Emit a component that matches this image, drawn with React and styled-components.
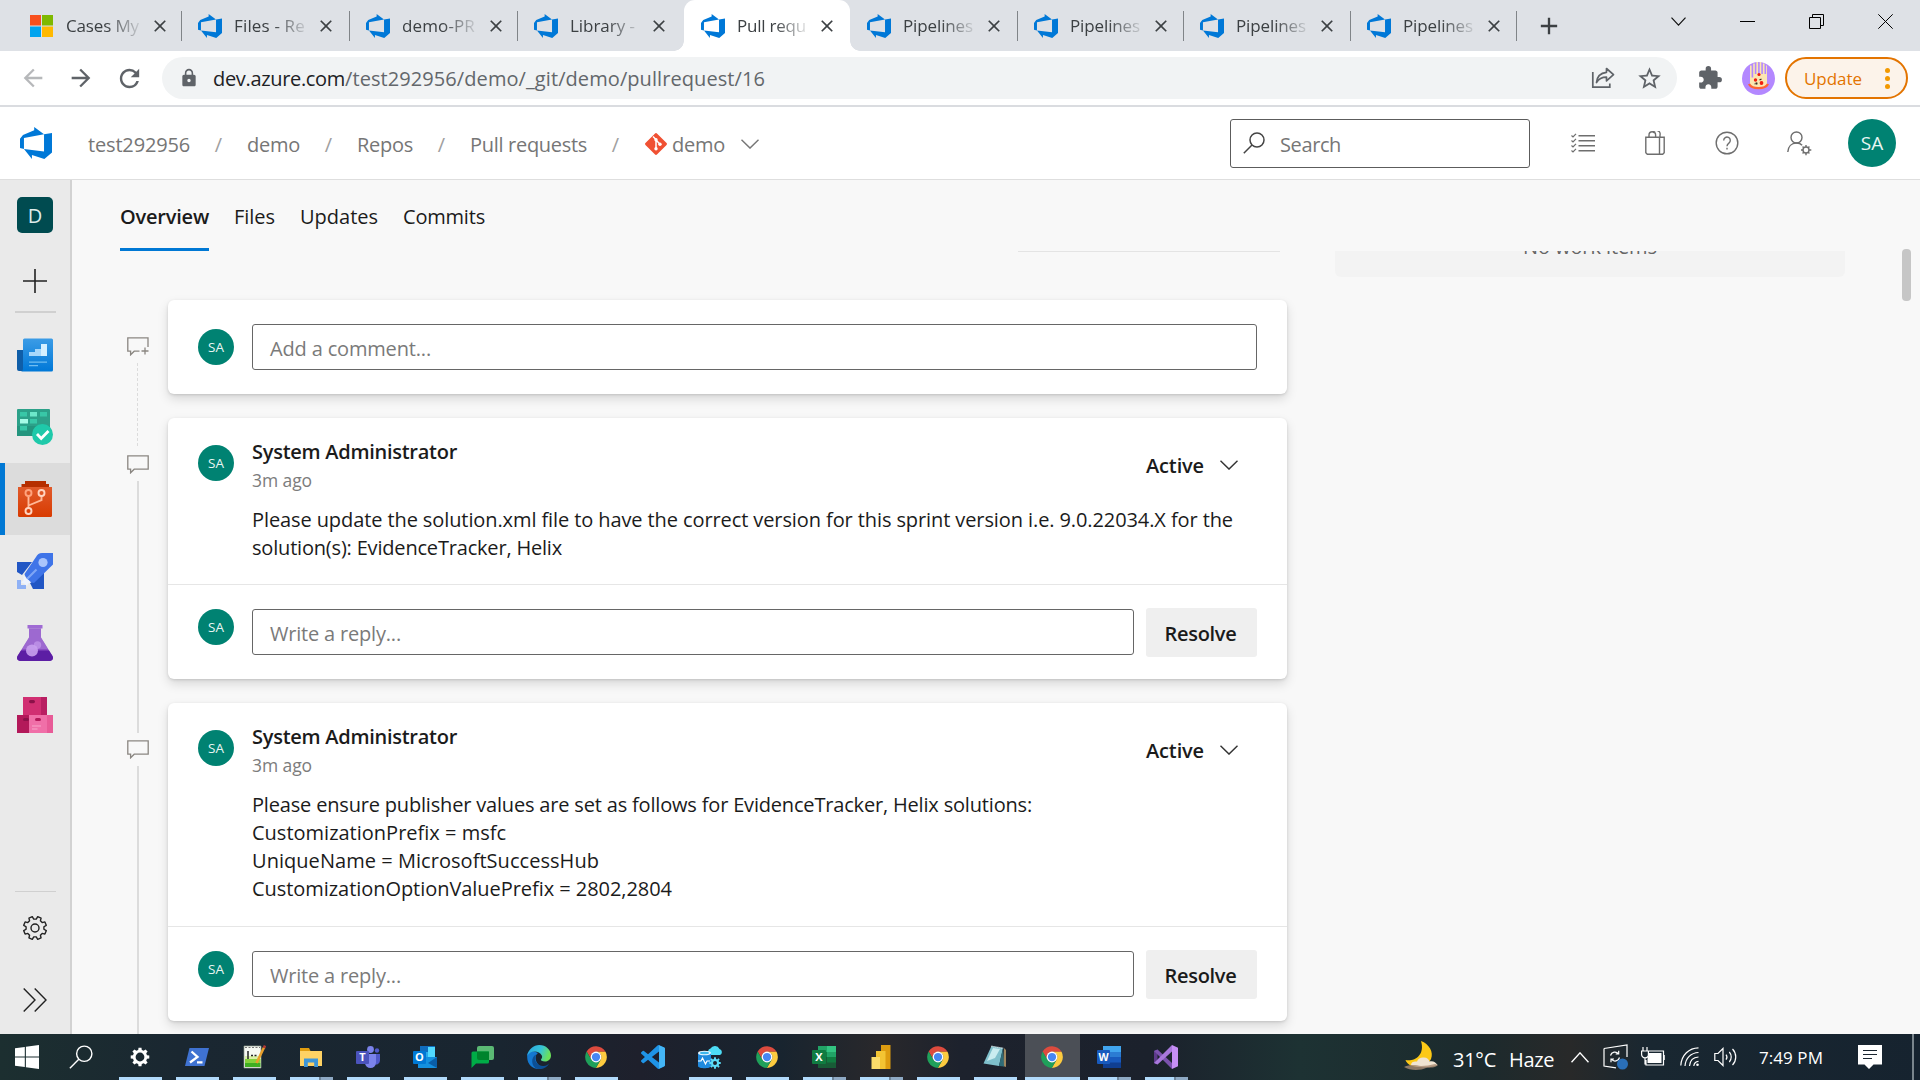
import React, { useLayoutEffect, useRef, useState } from "react";
import styled, { createGlobalStyle, css } from "styled-components";
import { MdExtension, MdLock, MdRefresh, MdStarBorder, MdArrowBack, MdArrowForward, MdAdd, MdClose } from "react-icons/md";

const GlobalStyle = createGlobalStyle`
  * { box-sizing: border-box; }
  body {
    margin: 0;
    overflow: hidden;
    background: #f8f8f8;
    font-family: "Open Sans", "Noto Sans", sans-serif;
    color: #1b1b1b;
  }
  svg { display: block; flex: none; }
`;

const TextBox = styled.span`
  display: inline-block;
  white-space: pre;
  flex: none;
`;

/* Text whose tracking is adjusted so that it spans exactly `w` pixels. */
function Fit({ w, children, className }) {
  const ref = useRef(null);
  const [tracking, setTracking] = useState(null);
  useLayoutEffect(() => {
    const natural = ref.current.getBoundingClientRect().width;
    setTracking((w - natural) / String(children).length);
  }, [w, children]);
  return (
    <TextBox ref={ref} className={className} style={{ letterSpacing: tracking === null ? undefined : `${tracking}px` }}>
      {children}
    </TextBox>
  );
}

/* ---------- shared layout ---------- */

const Screen = styled.div`
  width: 1920px;
  height: 1080px;
  display: flex;
  flex-direction: column;
  overflow: hidden;
`;

const Avatar = styled.div`
  width: ${(p) => p.$size}px;
  height: ${(p) => p.$size}px;
  border-radius: 50%;
  background: #008272;
  color: #e8f6f3;
  font-size: ${(p) => p.$font}px;
  display: flex;
  align-items: center;
  justify-content: center;
  flex: none;
`;

/* ---------- browser tabs ---------- */

const TabStrip = styled.div`
  height: 51px;
  background: #dee1e6;
  display: flex;
  padding-left: 13px;
  flex: none;
`;

const BrowserTab = styled.div`
  width: ${(p) => p.$w}px;
  height: 51px;
  display: flex;
  align-items: center;
  padding: 0 15px 0 17px;
  font-size: 17px;
  color: #3c4043;
  position: relative;
  ${(p) =>
    p.$active &&
    css`
      background: #fff;
      border-radius: 11px 11px 0 0;
      &::before,
      &::after {
        content: "";
        position: absolute;
        bottom: 0;
        width: 10px;
        height: 10px;
      }
      &::before {
        left: -10px;
        background: radial-gradient(circle at 0 0, transparent 9.5px, #fff 10px);
      }
      &::after {
        right: -10px;
        background: radial-gradient(circle at 100% 0, transparent 9.5px, #fff 10px);
      }
    `}
`;

const TabLabel = styled.div`
  width: 75px;
  margin: 0 11px 0 12px;
  white-space: nowrap;
  line-height: 28px;
  mask-image: linear-gradient(90deg, #000 55%, rgba(0, 0, 0, 0.15) 100%);
`;

const TabRule = styled.div`
  width: 1px;
  height: 30px;
  margin: 11px -1px 0 0;
  background: #808488;
  visibility: ${(p) => (p.$hidden ? "hidden" : "visible")};
`;

const NewTab = styled.div`
  display: flex;
  align-items: center;
  margin-left: 19px;
  color: #3c4043;
`;

const WindowButtons = styled.div`
  display: flex;
  margin-left: auto;
  padding-bottom: 8px;
`;

const WindowButton = styled.div`
  width: 69px;
  display: flex;
  align-items: center;
  justify-content: center;
`;

/* ---------- address bar ---------- */

const Toolbar = styled.div`
  height: 56px;
  background: #fff;
  border-bottom: 2px solid #dadce0;
  display: flex;
  align-items: center;
  color: #5f6368;
  flex: none;
`;

const NavIcon = styled.div`
  width: 48px;
  display: flex;
  justify-content: center;
  opacity: ${(p) => (p.$dim ? 0.45 : 1)};
`;

const NavGroup = styled.div`
  display: flex;
  padding-left: 9px;
  width: 162px;
`;

const Omnibox = styled.div`
  width: 1515px;
  height: 42px;
  border-radius: 21px;
  background: #f1f3f4;
  display: flex;
  align-items: center;
  padding: 0 14px 0 17px;
  font-size: 20px;
`;

const Url = styled.div`
  margin-left: 14px;
  flex: 1;
  display: flex;
  line-height: 30px;
  padding-top: 1px;
  color: #63676b;
`;

const Host = styled(Fit)`
  color: #202124;
`;

const OmniActions = styled.div`
  display: flex;
  gap: 21px;
  align-items: center;
`;

const ToolbarActions = styled.div`
  display: flex;
  align-items: center;
  padding-left: 20px;
`;

const PizzaAvatar = styled.div`
  margin: 0 10px 0 19px;
`;

const UpdateButton = styled.div`
  width: 123px;
  height: 42px;
  border-radius: 21px;
  border: 2px solid #e37400;
  background: #fcf3ea;
  color: #e37400;
  font-size: 17px;
  display: flex;
  align-items: center;
  justify-content: space-between;
  padding: 0 16px 0 17px;
`;

const Dots = styled.div`
  display: grid;
  gap: 3px;
  i {
    width: 5px;
    height: 5px;
    border-radius: 50%;
    background: #f29900;
  }
`;

/* ---------- Azure DevOps header ---------- */

const Header = styled.div`
  height: 73px;
  background: #fff;
  border-bottom: 1px solid #dedede;
  display: flex;
  align-items: center;
  padding: 0 24px 0 20px;
  font-size: 20px;
  color: #767676;
  flex: none;
`;

const Crumbs = styled.div`
  display: flex;
  align-items: center;
  margin-left: 36px;
  line-height: 28px;
  flex: 1;
  padding-top: 3px;
`;

const Slash = styled.span`
  width: 9px;
  margin: 0 24px;
  text-align: center;
  color: #a0a0a0;
`;

const RepoCrumb = styled.div`
  display: flex;
  align-items: center;
  margin-left: 1px;
  svg {
    margin-top: -2px;
  }
  svg:first-child {
    margin-right: 5px;
  }
  svg:last-child {
    margin-left: 16px;
  }
`;

const SearchBox = styled.div`
  width: 300px;
  height: 49px;
  border: 1px solid #5c5c5c;
  border-radius: 3px;
  display: flex;
  align-items: center;
  padding-left: 12px;
  gap: 15px;
  span {
    padding-top: 2px;
  }
`;

const HeaderIcon = styled.div`
  width: 72px;
  display: flex;
  justify-content: center;
`;

const HeaderIcons = styled.div`
  display: flex;
  align-items: center;
  margin: 0 13px 0 17px;
`;

/* ---------- body ---------- */

const Body = styled.div`
  height: 854px;
  display: flex;
  flex: none;
`;

const Rail = styled.nav`
  width: 72px;
  border-right: 2px solid #d2d2d2;
  background: #eaeaea;
  display: flex;
  flex-direction: column;
  overflow: hidden;
  flex: none;
`;

const RailItem = styled.div`
  height: ${(p) => p.$h || 72}px;
  display: flex;
  align-items: center;
  flex: none;
  padding-left: ${(p) => (p.$selected ? 12 : 17)}px;
  border-left: ${(p) => (p.$selected ? "5px solid #0078d4" : "0")};
  background: ${(p) => (p.$selected ? "#dcdcdc" : "transparent")};
`;

const ThinGlyph = styled.div`
  padding: ${(p) => p.$drop || 0}px 0 0 6px;
`;

const RailRule = styled.div`
  height: ${(p) => p.$h}px;
  margin: ${(p) => p.$m};
  background: #d0d0d0;
  flex: none;
`;

const ProjectTile = styled.div`
  width: 36px;
  height: 36px;
  border-radius: 5px;
  background: #004b50;
  color: #dfeceb;
  font-size: 20px;
  display: flex;
  align-items: center;
  justify-content: center;
`;

const Main = styled.main`
  flex: 1;
  display: flex;
  flex-direction: column;
  overflow: hidden;
`;

const PageTabs = styled.div`
  height: 71px;
  display: flex;
  gap: 25px;
  padding-left: 48px;
  font-size: 20px;
  flex: none;
`;

const PageTab = styled.div`
  height: 71px;
  padding-top: 23px;
  line-height: 28px;
  font-weight: ${(p) => (p.$active ? 600 : 400)};
  border-bottom: 3px solid ${(p) => (p.$active ? "#0078d4" : "transparent")};
`;

const Scroller = styled.div`
  flex: 1;
  display: flex;
  overflow: hidden;
`;

const Feed = styled.div`
  width: 1263px;
  padding-left: 48px;
  flex: none;
`;

const PastEdge = styled.div`
  width: 262px;
  height: 1px;
  margin: 0 0 48px 898px;
  background: #e4e4e4;
`;

const Entry = styled.div`
  display: flex;
  gap: 12px;
`;

const Gutter = styled.div`
  width: 36px;
  display: flex;
  flex-direction: column;
  align-items: center;
  flex: none;
`;

const Line = styled.div`
  width: 2px;
  ${(p) => (p.$h ? `height: ${p.$h}px;` : "flex: 1;")}
  background: ${(p) =>
    p.$look === "none"
      ? "transparent"
      : p.$look === "dashed"
        ? "linear-gradient(90deg, #dcdcdc 50%, transparent 50%) 0 0 / 2px 100%"
        : "#dcdcdc"};
  ${(p) => p.$look === "dashed" && "mask-image: repeating-linear-gradient(180deg, #000 0 3px, transparent 3px 5px);"}
`;

const GutterIcon = styled.div`
  height: 33px;
  padding-top: 7px;
`;

const Card = styled.section`
  width: 1119px;
  margin-bottom: 24px;
  border-radius: 6px;
  background: #fff;
  box-shadow: 0 5px 11px rgba(0, 0, 0, 0.13), 0 1px 3px rgba(0, 0, 0, 0.13);
  font-size: 20px;
  line-height: 28px;
`;

const ComposeRow = styled.div`
  height: 94px;
  display: flex;
  align-items: flex-start;
  padding: ${(p) => p.$top}px 30px 0;
`;

const ComposeAvatar = styled.div`
  padding-top: ${(p) => p.$drop}px;
  margin-right: 18px;
`;

const Field = styled.div`
  flex: 1;
  height: 46px;
  margin-top: ${(p) => p.$drop || 0}px;
  border: 1px solid #666;
  border-radius: 3px;
  display: flex;
  align-items: center;
  padding: 3px 0 0 17px;
  color: #7a7a7a;
`;

const Resolve = styled.div`
  width: 111px;
  height: 49px;
  margin-left: 12px;
  border-radius: 3px;
  background: #efefef;
  font-weight: 600;
  display: flex;
  align-items: center;
  justify-content: center;
  padding: 2px 2px 0 0;
`;

const Comment = styled.div`
  display: flex;
  padding: 20px 30px ${(p) => p.$bottom}px;
  border-bottom: 1px solid #e6e6e6;
`;

const CommentText = styled.div`
  flex: 1;
  margin-left: 18px;
`;

const CommentAvatar = styled.div`
  padding-top: 7px;
`;

const CommentHead = styled.div`
  display: flex;
  justify-content: space-between;
  height: 68px;
`;

const Author = styled.div`
  font-weight: 600;
`;

const Ago = styled.div`
  font-size: 17.5px;
  color: #7c7c7c;
`;

const Status = styled.div`
  display: flex;
  align-items: flex-start;
  font-weight: 600;
  padding: 14px 19px 0 0;
  svg {
    margin: 8px 0 0 16px;
  }
`;

const BodyLine = styled.div`
  height: 28px;
`;

const Side = styled.aside`
  width: 510px;
  overflow: hidden;
`;

const EmptyBox = styled.div`
  height: 60px;
  margin-top: -34px;
  padding-bottom: 2px;
  border-radius: 6px;
  background: #f3f3f3;
  color: #666;
  font-size: 20px;
  display: flex;
  align-items: center;
  justify-content: center;
`;

const ScrollTrack = styled.div`
  width: 18px;
  padding-top: 69px;
  flex: none;
`;

const ScrollThumb = styled.div`
  width: 9px;
  height: 52px;
  border-radius: 4px;
  background: #c6c6c6;
`;

/* ---------- taskbar ---------- */

const Taskbar = styled.div`
  height: 46px;
  display: flex;
  flex: none;
  color: #fff;
  background: linear-gradient(90deg, #1c2f30 0, #1a2731 180px, #192530 500px, #1e202c 640px, #18242f 780px, #29282b 880px, #1d222d 960px, #1b212c 1150px, #1d3233 1300px, #1c2a2d 1480px, #282929 1570px, #192731 1650px, #16232f 1920px);
`;

const SystemButton = styled.div`
  width: 54px;
  display: flex;
  align-items: center;
  justify-content: center;
`;

const Apps = styled.div`
  display: flex;
  gap: 2px;
  margin-left: 5px;
`;

const AppButton = styled.div`
  width: 55px;
  height: 46px;
  padding-top: 11px;
  display: flex;
  flex-direction: column;
  align-items: center;
  justify-content: space-between;
  background: ${(p) => (p.$active ? "#4b4f56" : "transparent")};
  svg {
    margin-right: 1px;
  }
`;

const Running = styled.div`
  width: ${(p) => (p.$mode === "active" ? 55 : 43)}px;
  height: 3px;
  visibility: ${(p) => (p.$mode === "off" ? "hidden" : "visible")};
  background: ${(p) => (p.$mode === "multi" ? "linear-gradient(90deg, #b1dafb 29px, #6d8499 29px 31px, #8ea9c4 31px)" : "#b1dafb")};
`;

const Tray = styled.div`
  margin-left: auto;
  display: flex;
  align-items: center;
`;

const Weather = styled.div`
  display: flex;
  align-items: center;
  font-size: 20px;
  gap: 13px;
  padding-top: 4px;
  svg {
    margin-top: -6px;
  }
`;

const TrayIcons = styled.div`
  display: flex;
  align-items: center;
  gap: 14px;
  margin: 0 21px 0 17px;
`;

const SyncGroup = styled.div`
  display: flex;
  align-items: center;
  gap: 12px;
`;

const Clock = styled.div`
  font-size: 17px;
`;

const Notify = styled.div`
  margin: 0 30px 0 35px;
`;

const DesktopPeek = styled.div`
  width: 8px;
  height: 46px;
  border-left: 2px solid #7a858c;
`;

/* ---------- drawings ---------- */

const DevOps = ({ size = 24 }) => (
  <svg width={size} height={size} viewBox="0 0 24 24">
    <path
      fill="#0078d7"
      d="M0 8.877L2.247 5.91l8.405-3.416V.022l7.37 5.393L2.966 8.338v8.225L0 15.707zm24-4.45v14.651l-5.753 4.9-9.303-3.057v3.056l-5.978-7.416 15.057 1.798V5.415z"
    />
  </svg>
);

const MsLogo = () => (
  <svg width="24" height="24" viewBox="0 0 24 24">
    <path fill="#f8501e" d="M0 1h11v10.500H0z" />
    <path fill="#7fb900" d="M12 1h11v10.500H12z" />
    <path fill="#01a4ef" d="M0 12.500h11V23H0z" />
    <path fill="#ffb901" d="M12 12.500h11V23H12z" />
  </svg>
);

const Chevron = ({ w = 18, h = 10, color = "#333", flip, sw = 1.4 }) => (
  <svg width={w} height={h} viewBox={`0 0 ${w} ${h}`} fill="none" stroke={color} strokeWidth={sw}>
    <path d={flip ? `M.5 ${h - 0.7}L${w / 2} .9L${w - 0.5} ${h - 0.7}` : `M.5 .7L${w / 2} ${h - 0.9}L${w - 0.5} .7`} />
  </svg>
);

const Share = () => (
  <svg width="24" height="24" viewBox="0 0 24 24" fill="none" stroke="#5f6368" strokeWidth="1.700">
    <path d="M1.800 6v15.200h17V17.500" />
    <path d="M15.500 2.500l7 6.200-7 6.200v-3.700c-4.500 0-7.800 1.600-10 5.300.5-6 3.800-9.500 10-10.200z" strokeLinejoin="round" />
  </svg>
);

const Pizza = () => (
  <svg width="33" height="33" viewBox="0 0 33 33">
    <circle cx="16.500" cy="16.500" r="16.500" fill="#b388ff" />
    <path fill="#fbe6b2" d="M8 3.500h1.600v12h1.600V1.500h1.600V12h1.600V0h1.700v12h1.600V0h1.600v12h1.600V1.500h1.600V12h1.600V3.500H25V23c-4 4.500-13 4.500-17 0z" />
    <path d="M7 22c3 5.500 16 5.500 19 0" fill="none" stroke="#ff6333" strokeWidth="2.400" />
    <circle cx="17" cy="12.500" r="1.600" fill="#f21d0d" />
    <circle cx="13.500" cy="18" r="1.700" fill="#f21d0d" />
    <circle cx="19.500" cy="21" r="1.900" fill="#f21d0d" />
    <path stroke="#3a2a20" strokeWidth="1.300" d="M17.500 18l2-1M12.500 22l3-1M14 20.500l1 2" />
  </svg>
);

const Git = () => (
  <svg width="22" height="22" viewBox="0 0 22 22">
    <path fill="#f05133" d="M9.800.7a1.600 1.600 0 0 1 2.400 0l9.100 9.100a1.600 1.600 0 0 1 0 2.400l-9.100 9.100a1.600 1.600 0 0 1-2.400 0L.7 12.200a1.600 1.600 0 0 1 0-2.400z" />
    <path d="M8 3.500l3 3v9.500M11 7l3.800 4" stroke="#fff" strokeWidth="1.500" fill="none" />
    <g fill="#fff">
      <circle cx="11" cy="6.800" r="1.700" />
      <circle cx="11" cy="15.700" r="1.700" />
      <circle cx="15" cy="11.200" r="1.700" />
    </g>
  </svg>
);

const Magnifier = ({ size = 22, color = "#444", sw = 1.5 }) => (
  <svg width={size} height={size} viewBox="0 0 22 22" fill="none" stroke={color} strokeWidth={sw}>
    <circle cx="14" cy="8" r="7" />
    <path d="M9 13L.8 21.200" />
  </svg>
);

const TaskList = () => (
  <svg width="24" height="20" viewBox="0 0 24 20" fill="none" stroke="#6e6e6e" strokeWidth="1.400">
    <path d="M7.500 2.700H24M7.500 7.700H24M7.500 12.700H24M7.500 17.700H24" />
    <path d="M.5 2.500l1.500 1.500L5 .8M.5 7.500L2 9l3-3.200M.5 12.500L2 14l3-3.200M.5 17.500L2 19l3-3.200" strokeWidth="1.200" />
  </svg>
);

const Bag = () => (
  <svg width="20" height="24" viewBox="0 0 20 24" fill="none" stroke="#6e6e6e" strokeWidth="1.400">
    <path d="M.8 6.300h18.400v15.500l-1.500 1.500H2.300L.8 21.800zM14.500 6.300v17M4 6.300V4a3.300 3.300 0 0 1 6.600 0v2.300M8 2a3.300 3.300 0 0 1 7 2v2.300" />
  </svg>
);

const Help = () => (
  <svg width="24" height="24" viewBox="0 0 24 24" fill="none" stroke="#6e6e6e" strokeWidth="1.400">
    <circle cx="12" cy="12" r="10.800" />
    <path d="M8.700 9.500a3.300 3.300 0 1 1 5.200 2.600c-1.300.9-1.900 1.500-1.900 3.200M12 16.800v1.800" />
  </svg>
);

const UserSettings = () => (
  <svg width="25" height="25" viewBox="0 0 25 25" fill="none" stroke="#6e6e6e" strokeWidth="1.400">
    <circle cx="9.500" cy="6.500" r="5.500" />
    <path d="M.8 21c.3-5.500 3.800-9 8.700-9 2.500 0 4.300.8 5.600 2.200" />
    <circle cx="19" cy="19" r="3" />
    <path d="M19 14v2M19 22v2.300M14 19h2M22 19h2.300M15.600 15.600l1.300 1.300M21.100 21.100l1.300 1.300M15.600 22.400l1.300-1.300M21.100 16.900l1.300-1.300" />
  </svg>
);

const Plus = () => (
  <svg width="24" height="24" viewBox="0 0 24 24" stroke="#222" strokeWidth="1.600">
    <path d="M12 0v24M0 12h24" />
  </svg>
);

const OverviewIcon = () => (
  <svg width="36" height="36" viewBox="0 0 36 36">
    <defs>
      <linearGradient id="ov" x1="0" y1="0" x2="0" y2="1">
        <stop offset="0" stopColor="#3c9ce6" />
        <stop offset="1" stopColor="#0078d7" />
      </linearGradient>
    </defs>
    <path fill="#0f5ea8" d="M0 13h7v21H2a2 2 0 0 1-2-2z" />
    <path fill="url(#ov)" d="M6 3a1.500 1.500 0 0 1 1.500-1.500h27A1.500 1.500 0 0 1 36 3v30a1.500 1.500 0 0 1-1.500 1.500H4A2.500 2.500 0 0 0 6 32z" />
    <path fill="#a8d8fb" d="M12 15h6v-3h6V7h6v12H12z" />
    <path fill="#d6f0ff" d="M24 7h6v12h-6z" />
    <path fill="#6fbdf2" d="M12 24.500h18v1.200H12zM12 28h9v1.200h-9z" />
  </svg>
);

const BoardsIcon = () => (
  <svg width="36" height="36" viewBox="0 0 36 36">
    <path fill="#2ca189" d="M0 1a1 1 0 0 1 1-1h31a1 1 0 0 1 1 1v26H0z" />
    <path fill="#1c8a74" d="M0 17h33v10H0z" opacity=".5" />
    <path fill="#38c7a7" d="M3 3h7v4.500H3zM23 3h7v4.500h-7zM13 10h7v4.500h-7zM3 17h7v4.500H3z" />
    <path fill="#6de7ca" d="M13 3h7v4.500h-7z" />
    <path fill="#a5fbe6" d="M3 10h8v4.500H3z" />
    <circle cx="25.500" cy="25.500" r="10.500" fill="#1fc9aa" />
    <path d="M20 25l4.200 4.500L31.500 22" fill="none" stroke="#fff" strokeWidth="2.800" />
  </svg>
);

const ReposIcon = () => (
  <svg width="36" height="36" viewBox="0 0 36 36">
    <defs>
      <linearGradient id="rp" x1="0" y1="0" x2="0" y2="1">
        <stop offset="0" stopColor="#e05a2b" />
        <stop offset="1" stopColor="#d83b01" />
      </linearGradient>
    </defs>
    <path fill="#b52e00" d="M8 0h21v3h3v4H4.500V3H8z" />
    <path fill="url(#rp)" d="M1 6h34v28.500A1.500 1.500 0 0 1 33.500 36h-31A1.500 1.500 0 0 1 1 34.500z" />
    <g fill="none" strokeWidth="1.900">
      <path d="M11.500 15v12M11.500 24.500L24.500 19v-4" stroke="#ffb898" />
      <circle cx="11.500" cy="12" r="3" stroke="#ffa37d" />
      <circle cx="24.500" cy="12" r="3" stroke="#ffd4c1" />
      <circle cx="11.500" cy="30" r="3" stroke="#ffd4c1" />
    </g>
  </svg>
);

const PipelinesIcon = () => (
  <svg width="36" height="36" viewBox="0 0 36 36">
    <path fill="#2156c4" d="M0 9h15L5 22 0 19zM27 17v19H16l-4-8z" />
    <path fill="#3f74e8" d="M36 0v11.500L17 30c-3 0-9-5-9.500-9L19 4c1.500-2.500 3-4 6-4z" />
    <circle cx="26" cy="9.500" r="4.600" fill="#a9c4fb" />
    <path d="M19.500 16.500L9 27" stroke="#7fa5f5" strokeWidth="2.200" />
    <path fill="#eef3fe" d="M6.500 22.500l3 3 5 4-3.500 1-1 2.500-3-2.500-3-.5 2.500-3z" />
    <path fill="#8fb1f5" d="M0 27h4v5h5v4H0z" />
  </svg>
);

const TestIcon = () => (
  <svg width="36" height="36" viewBox="0 0 36 36">
    <path fill="#a06bd4" d="M10.500 0h15v3.500h-15z" />
    <path fill="#8a4fc4" d="M12 3.500h12v9L35.500 31c1.300 2.500 0 5-3 5h-29c-3 0-4.300-2.500-3-5L12 12.500z" />
    <path fill="#b48ae0" d="M12 3.500h12v9l7 11.500H5l7-11.500z" opacity=".45" />
    <path fill="#5c1ea4" d="M4 25.500h28l3.500 5.500c1.300 2.500 0 5-3 5h-29c-3 0-4.300-2.500-3-5z" />
    <circle cx="20.500" cy="20" r="3.700" fill="#b98ce4" />
    <circle cx="15" cy="25.500" r="6" fill="#c9a0ee" opacity=".9" />
  </svg>
);

const ArtifactsIcon = () => (
  <svg width="36" height="36" viewBox="0 0 36 36">
    <path fill="#d12f72" d="M6 0h18v18H6z" />
    <path fill="#b91f62" d="M24 0h6v18h-6z" />
    <path fill="#b3195a" d="M0 18h12v18H0z" />
    <path fill="#f06fa8" d="M12 18h18v18H12z" />
    <path fill="#e85b97" d="M30 18h6v18h-6z" />
    <g fill="#8b1149">
      <rect x="12" y="3" width="6" height="3.200" rx="1.600" />
      <rect x="6" y="21" width="6" height="3" rx="1.500" />
    </g>
    <rect x="18" y="21" width="6" height="3" rx="1.500" fill="#b3195a" />
    <path fill="#f8a5c9" d="M15 28.500h9v1h-9zM15 31.500h5.500v1H15z" />
  </svg>
);

const gearPath = (cx, cy, ro, ri, teeth) => {
  const pts = [];
  const step = (Math.PI * 2) / teeth;
  for (let i = 0; i < teeth; i++) {
    const a = i * step - Math.PI / 2;
    [[-0.32, ri], [-0.2, ro], [0.2, ro], [0.32, ri]].forEach(([k, r]) =>
      pts.push(`${(cx + r * Math.cos(a + k * step)).toFixed(2)} ${(cy + r * Math.sin(a + k * step)).toFixed(2)}`)
    );
  }
  return `M${pts.join("L")}Z`;
};

const Gear = () => (
  <svg width="24" height="24" viewBox="0 0 24 24" fill="none" stroke="#222" strokeWidth="1.400" strokeLinejoin="round">
    <path d={gearPath(12, 12, 11.6, 9, 8)} transform="rotate(22.500 12 12)" />
    <circle cx="12" cy="12" r="4" />
  </svg>
);

const Expand = () => (
  <svg width="24" height="24" viewBox="0 0 24 24" fill="none" stroke="#222" strokeWidth="1.400">
    <path d="M.7.5L12 12 .7 23.500M11.700.5L23 12 11.700 23.500" />
  </svg>
);

const Bubble = ({ plus }) => (
  <svg width="22" height="19" viewBox="0 0 22 19" fill="none" stroke="#8a8681" strokeWidth="1.300">
    {plus ? (
      <path d="M21 10V.8H.8v13.400h2.800v3.600l3.600-3.600h5.300M18 10.500v7M14.500 14h7" />
    ) : (
      <path d="M.8.8h20.400v13.400H7.200l-3.600 3.600v-3.600H.8z" />
    )}
  </svg>
);

const Ico = ({ children }) => (
  <svg width="24" height="24" viewBox="0 0 24 24">
    {children}
  </svg>
);

const WindowsLogo = () => (
  <Ico>
    <path fill="#fff" d="M0 3.300L9.800 2v9.500H0zM10.900 1.800L24 0v11.500H10.900zM0 12.500h9.800V22L0 20.700zM10.900 12.500H24V24l-13.100-1.800z" />
  </Ico>
);

const SettingsIcon = () => (
  <Ico>
    <path fill="#fff" fillRule="evenodd" d={`${gearPath(12, 12, 9.4, 7.2, 8)}M12 7.600a4.400 4.400 0 1 0 0 8.800a4.400 4.400 0 1 0 0-8.800z`} />
  </Ico>
);

const PowerShell = () => (
  <Ico>
    <path fill="#3f72d1" d="M4.500 3H24l-4.500 18H0z" />
    <path fill="none" stroke="#fff" strokeWidth="2.300" d="M6.500 6.500l6 5.500-7.500 5.500M12 17.300h5.500" />
  </Ico>
);

const NotepadPP = () => (
  <Ico>
    <path fill="#f5f8f2" stroke="#8f9b8c" strokeWidth=".7" d="M2 1h17v22H2z" />
    <path fill="#d9f0a6" d="M3 11h15.500v5H3z" />
    <path fill="#86d23c" d="M3 14h15.500v4H3z" />
    <path fill="#3fae22" d="M3 18h15.500v4H3z" />
    <path fill="none" stroke="#777" strokeWidth="1" strokeDasharray="2 1.500" d="M3 2.500h15" />
    <path stroke="#222" strokeWidth="1.500" d="M6 6v8M9 10.500h2M12.500 10.500h2" />
    <path stroke="#e9a02c" strokeWidth="2.600" d="M22 2.500L14.500 18" />
    <path stroke="#b53a34" strokeWidth="2.600" d="M23 .5l-1 2.500" />
  </Ico>
);

const Explorer = () => (
  <Ico>
    <path fill="#e09d0f" d="M1 3h9l1.500 3H1z" />
    <path fill="#fed264" d="M1 6h22v15H1z" />
    <path fill="#3e96d8" d="M5 13.500h14V22h-3.800v-4.500H8.800V22H5z" />
  </Ico>
);

const OfficeLetter = ({ x, y, size, children }) => (
  <text x={x} y={y} fontSize={size} fontWeight="700" fill="#fff" textAnchor="middle" fontFamily="Open Sans, sans-serif">
    {children}
  </text>
);

const Teams = () => (
  <Ico>
    <circle cx="14.500" cy="4.500" r="3.400" fill="#7b83eb" />
    <circle cx="21" cy="5.500" r="2.200" fill="#5059c9" />
    <path fill="#5059c9" d="M15 9h9v6.500a4 4 0 0 1-6 3.500z" />
    <path fill="#7b83eb" d="M9 9h11v8.500a5.500 5.500 0 0 1-11 0z" />
    <rect y="6" width="13" height="13" rx="1" fill="#4b53bc" />
    <OfficeLetter x={6.500} y={16.400} size={11}>T</OfficeLetter>
  </Ico>
);

const Outlook = () => (
  <Ico>
    <path fill="#0f6cbd" d="M7 1h15v12H7z" />
    <path fill="#50d9ff" d="M15 2h7v10h-7z" />
    <path fill="#28a8ea" d="M7 7h8v6H7z" />
    <path fill="#1490df" d="M5 12h19v11H5z" />
    <path fill="#0a5ea8" d="M24 12l-9 6 9 5z" />
    <rect y="6" width="13" height="13" rx="1" fill="#0078d4" />
    <OfficeLetter x={6.500} y={16.400} size={11}>O</OfficeLetter>
  </Ico>
);

const Chat = () => (
  <Ico>
    <rect x="7" y="1" width="17" height="14" rx="2" fill="#5bb974" />
    <path fill="#00ac47" d="M3 6.500h15a1 1 0 0 1 1 1V17a1.500 1.500 0 0 1-1.500 1.500H6L1.500 23V8A1.500 1.500 0 0 1 3 6.500z" />
    <path fill="#00832d" d="M7 6.500h12v8.500H9a2 2 0 0 1-2-2z" />
  </Ico>
);

const Edge = () => (
  <Ico>
    <defs>
      <linearGradient id="ed" x1="0" y1="0" x2="1" y2=".3">
        <stop offset="0" stopColor="#2ba4e0" />
        <stop offset=".6" stopColor="#35c3d8" />
        <stop offset="1" stopColor="#6ae05a" />
      </linearGradient>
    </defs>
    <path fill="#1478d0" d="M.2 11C.5 4 6 6 11 8c-2 1.500-3 4-2 7.500 1 3.500 4 6.500 8 7-6 3.500-17.500.5-16.800-11.500z" />
    <path fill="#0c4f94" d="M9.500 9.500C6 13 9 20.500 16 21c3 .2 5.500-1.500 6.500-3-2.500 5-7.500 6.500-11.500 6-5-1-6.500-6.500-5.500-10 .6-2.200 2.200-4 4-4.500z" />
    <path fill="url(#ed)" d="M.2 11C1.500 4 6.500 0 12.300 0 19 0 24 5 24 10.500c0 3.500-2.500 6-6 6-3 0-4.500-1.200-4-2 1-1.500 1.500-2.500.8-4C13.500 8 10.500 6.500 7.500 6.500 4 6.500 1.500 8.500.2 11z" />
  </Ico>
);

const Chrome = () => {
  const blade = "M12 6.200H22.400A12 12 0 0 0 1.780 5.900L6.980 14.900A5.800 5.800 0 0 1 12 6.200Z";
  return (
    <Ico>
      <g transform="translate(1 1) scale(.9167)">
        <path d={blade} fill="#dd4b3e" />
        <path d={blade} fill="#fdcb3f" transform="rotate(120 12 12)" />
        <path d={blade} fill="#1fa05a" transform="rotate(240 12 12)" />
        <circle cx="12" cy="12" r="5.900" fill="#fff" />
        <circle cx="12" cy="12" r="4.500" fill="#4687f4" />
      </g>
    </Ico>
  );
};

const VsCode = () => (
  <Ico>
    <path
      fill="#1f94e6"
      d="M23.150 2.587L18.210.21a1.494 1.494 0 0 0-1.705.29l-9.460 8.630-4.120-3.128a.999.999 0 0 0-1.276.057L.327 7.261A1 1 0 0 0 .326 8.740L3.899 12 .326 15.260a1 1 0 0 0 .001 1.479L1.650 17.940a.999.999 0 0 0 1.276.057l4.120-3.128 9.460 8.630a1.492 1.492 0 0 0 1.704.290l4.942-2.377A1.500 1.500 0 0 0 24 20.060V3.939a1.500 1.500 0 0 0-.850-1.352zm-5.146 14.861L10.826 12l7.178-5.448v10.896z"
    />
    <path fill="#44b5f5" d="M18 .2l5.150 2.387A1.500 1.500 0 0 1 24 3.939V20.060a1.500 1.500 0 0 1-.850 1.300L18 23.800z" />
  </Ico>
);

const DataStudio = () => (
  <Ico>
    <path fill="#4ddcf5" d="M12 10a3.500 3.500 0 0 1 .5-6.500A5 5 0 0 1 21.500 4 3.200 3.200 0 0 1 22 10z" />
    <path fill="#1f8ade" d="M0 8h13v13c0 3-13 3-13 0z" />
    <ellipse cx="6.500" cy="8" rx="6.500" ry="2.300" fill="#e8f6ff" />
    <ellipse cx="6.500" cy="8" rx="4.600" ry="1.200" fill="#3fb6ec" />
    <path fill="none" stroke="#fff" strokeWidth="1.200" d="M0 16h3l1.500-3 3 6 1.500-3h3" />
    <path fill="#5cdcf7" fillRule="evenodd" d={`${gearPath(17, 18, 5.8, 4.2, 8)}M17 16a2 2 0 1 0 0 4a2 2 0 1 0 0-4z`} />
  </Ico>
);

const Excel = () => (
  <Ico>
    <path fill="#21a366" d="M6 1h9v6H6z" />
    <path fill="#33c481" d="M15 1h9v6h-9z" />
    <path fill="#107c41" d="M6 7h9v5H6z" />
    <path fill="#21a366" d="M15 7h9v5h-9z" />
    <path fill="#185c37" d="M6 12h18v11H6z" />
    <path fill="#107c41" d="M15 12h9v5.500h-9z" />
    <rect y="5" width="14" height="14" rx="1" fill="#107c41" />
    <OfficeLetter x={7} y={16} size={11}>X</OfficeLetter>
  </Ico>
);

const Word = () => (
  <Ico>
    <path fill="#41a5ee" d="M6 1h18v6H6z" />
    <path fill="#2b7cd3" d="M6 7h18v5H6z" />
    <path fill="#185abd" d="M6 12h18v6H6z" />
    <path fill="#103f91" d="M6 17.500h18V23H6z" />
    <rect y="5" width="13" height="14" rx="1" fill="#185abd" />
    <OfficeLetter x={6.500} y={15.800} size={10.500}>W</OfficeLetter>
  </Ico>
);

const PowerBi = () => (
  <Ico>
    <path fill="#dd9c10" d="M12 0h9.500v24H12z" />
    <path fill="#f3c433" d="M7 6h9.500v18H7z" />
    <path fill="#fbdc6a" d="M2.500 12H11v12H2.500z" />
  </Ico>
);

const Notepad = () => (
  <Ico>
    <path fill="#9f8860" d="M21 3l2 2v17l-3-1z" />
    <path fill="#7fc0cc" d="M8.500 1L20 3l-4 18L.5 18.500z" />
    <path fill="#c9ecf0" d="M10 3l7 1-5 9-8 3z" />
    <path fill="#2f6c78" d="M20 3l1 18.500-5-.5z" />
    <path stroke="#e8e8e8" strokeWidth="1.500" strokeDasharray="1 1" d="M8.500 1.300L20.500 3.300" />
  </Ico>
);

const VisualStudio = () => (
  <Ico>
    <path fill="#5d3a8a" d="M0 6l3.500-1.500v15L0 18z" />
    <path fill="#7b52ae" d="M3.500 4.500L18 18v6L0 6z" />
    <path fill="#a878dc" d="M0 18L18 0v6.500L3.500 19.500z" />
    <path fill="#c68ef5" d="M18 0l6 2.800v18.400L18 24z" />
  </Ico>
);

const Moon = () => (
  <svg width="36" height="30" viewBox="0 0 36 30">
    <path fill="#fdc916" d="M17 0c8 3 13 11 10 18-3 7-13 9-19 7-3-1-6-4-6.500-6 8 2 20-4 15.500-19z" />
    <path fill="#f0e4d2" d="M7 24c0-3 3-4 6-3.500 1-3 4-4.500 7-4 3 0 5 2 5.500 4 4-1 6 1 8 3.500-8 3-20 3-26.500 0z" />
    <path fill="#a98b73" d="M0 26c6-3 12-2 17-1 5 0 9-1 14-2l3 1c-3 3-8 2.500-12 3-5 2.500-16 3-22-1z" opacity=".8" />
  </svg>
);

const SyncIcon = () => (
  <svg width="26" height="26" viewBox="0 0 26 26" fill="none" stroke="#fff" strokeWidth="1.200">
    <path d="M1 4.500L24 1v12M1 4.500V22l12 1.800" />
    <path d="M7.500 11.500a4.500 4.500 0 0 1 8-1.500M15.700 6.800V10h-3M16.500 13.500a4.500 4.500 0 0 1-8 1.700M8 18.200V15h3" />
    <circle cx="19.500" cy="20" r="5.500" fill="#2a6fb8" stroke="none" />
  </svg>
);

const Battery = () => (
  <svg width="25" height="20" viewBox="0 0 25 20" fill="none" stroke="#fff" strokeWidth="1.200">
    <path fill="#fff" stroke="none" d="M8 6h12.500v10H6.500v-4z" />
    <path d="M8 4h14.500v14H5v-5M23.200 8v5M2 0v4M6 0v4M.6 4h6.800v3.500a3.400 3.400 0 0 1-6.800 0zM4 11v6.500" />
  </svg>
);

const Wifi = () => (
  <svg width="20" height="20" viewBox="0 0 20 20" fill="none" stroke="#fff" strokeWidth="1.200">
    <path d="M.8 18.500C1.500 8 9 1 18.500.8M5 19c.5-8 6-13.200 13.500-13.500M9.500 19c.5-5.500 4-8.800 9-9M13.800 19c.3-2.800 2-4.500 4.700-4.700" />
    <circle cx="17.500" cy="17.800" r="1.300" fill="#fff" stroke="none" />
  </svg>
);

const Volume = () => (
  <svg width="24" height="20" viewBox="0 0 24 20" fill="none" stroke="#fff" strokeWidth="1.200">
    <path d="M.8 6.500H4L9 1.500v17l-5-5H.8zM12 7.500a4 4 0 0 1 0 5M15.300 5a7.500 7.500 0 0 1 0 10M18.500 2a11.500 11.500 0 0 1 0 16" />
  </svg>
);

const NotifyIcon = () => (
  <Ico>
    <path fill="#fff" d="M0 0h24v19.500h-8.500L11 24l-4.500-4.500H0z" />
    <path stroke="#1a2530" strokeWidth="1.200" d="M5 5.500h14M5 9.500h14M5 13.500h9" />
  </Ico>
);

/* ---------- data ---------- */

const browserTabs = [
  { label: "Cases My", w: 168, text: 73, ms: true },
  { label: "Files - Re", w: 168, text: 71 },
  { label: "demo-PR", w: 168, text: 73 },
  { label: "Library -", w: 167, text: 65 },
  { label: "Pull requ", w: 166, text: 69, active: true },
  { label: "Pipelines", w: 167, text: 70 },
  { label: "Pipelines", w: 166, text: 70 },
  { label: "Pipelines", w: 167, text: 70 },
  { label: "Pipelines", w: 166, text: 70 },
];

const crumbs = [
  ["test292956", 102],
  ["demo", 53],
  ["Repos", 56],
  ["Pull requests", 117],
];

const railIcons = [OverviewIcon, BoardsIcon, ReposIcon, PipelinesIcon, TestIcon, ArtifactsIcon];

const pageTabs = [
  ["Overview", 89],
  ["Files", 41],
  ["Updates", 78],
  ["Commits", 82],
];

const threads = [
  {
    bottom: 22,
    lines: [
      ["Please update the solution.xml file to have the correct version for this sprint version i.e. 9.0.22034.X for the", 981],
      ["solution(s): EvidenceTracker, Helix", 310],
    ],
  },
  {
    bottom: 23,
    lines: [
      ["Please ensure publisher values are set as follows for EvidenceTracker, Helix solutions:", 780],
      ["CustomizationPrefix = msfc", 254],
      ["UniqueName = MicrosoftSuccessHub", 347],
      ["CustomizationOptionValuePrefix = 2802,2804", 420],
    ],
  },
];

const apps = [
  [SettingsIcon, "on"],
  [PowerShell, "on"],
  [NotepadPP, "on"],
  [Explorer, "multi"],
  [Teams, "on"],
  [Outlook, "on"],
  [Chat, "on"],
  [Edge, "multi"],
  [Chrome, "on"],
  [VsCode, "off"],
  [DataStudio, "on"],
  [Chrome, "on"],
  [Excel, "multi"],
  [PowerBi, "multi"],
  [Chrome, "on"],
  [Notepad, "on"],
  [Chrome, "active"],
  [Word, "multi"],
  [VisualStudio, "multi"],
];

/* ---------- sections ---------- */

function Thread({ lines, bottom, first }) {
  return (
    <Entry>
      <Gutter>
        <Line $h={30} $look={first ? "dashed" : "solid"} />
        <GutterIcon>
          <Bubble />
        </GutterIcon>
        <Line $look="solid" />
      </Gutter>
      <Card>
        <Comment $bottom={bottom}>
          <CommentAvatar>
            <Avatar $size={36} $font={13.5}>SA</Avatar>
          </CommentAvatar>
          <CommentText>
            <CommentHead>
              <div>
                <Author>
                  <Fit w={205}>System Administrator</Fit>
                </Author>
                <Ago>
                  <Fit w={60}>3m ago</Fit>
                </Ago>
              </div>
              <Status>
                <Fit w={58}>Active</Fit>
                <Chevron w={18} h={10} />
              </Status>
            </CommentHead>
            {lines.map(([text, w]) => (
              <BodyLine key={text}>
                <Fit w={w}>{text}</Fit>
              </BodyLine>
            ))}
          </CommentText>
        </Comment>
        <ComposeRow $top={23}>
          <ComposeAvatar $drop={1}>
            <Avatar $size={36} $font={13.5}>SA</Avatar>
          </ComposeAvatar>
          <Field $drop={1}>
            <Fit w={131}>Write a reply...</Fit>
          </Field>
          <Resolve>
            <Fit w={72}>Resolve</Fit>
          </Resolve>
        </ComposeRow>
      </Card>
    </Entry>
  );
}

export default function App() {
  return (
    <Screen>
      <GlobalStyle />
      <TabStrip>
        {browserTabs.map((t, i) => (
          <React.Fragment key={i}>
            <BrowserTab $w={t.w} $active={t.active}>
              {t.ms ? <MsLogo /> : <DevOps size={24} />}
              <TabLabel>
                <Fit w={t.text}>{t.label}</Fit>
              </TabLabel>
              <MdClose size={20} />
            </BrowserTab>
            <TabRule $hidden={i === 3 || i === 4} />
          </React.Fragment>
        ))}
        <NewTab>
          <MdAdd size={28} />
        </NewTab>
        <WindowButtons>
          <WindowButton>
            <Chevron w={15} h={9} color="#111" sw={1.2} />
          </WindowButton>
          <WindowButton>
            <svg width="15" height="15" viewBox="0 0 15 15" stroke="#000">
              <path d="M0 7.500h15" />
            </svg>
          </WindowButton>
          <WindowButton>
            <svg width="15" height="15" viewBox="0 0 15 15" fill="none" stroke="#000">
              <path d="M.5 3.500h11v11H.5zM3.500 3.500v-3h11v11h-3" />
            </svg>
          </WindowButton>
          <WindowButton>
            <svg width="15" height="15" viewBox="0 0 15 15" stroke="#000">
              <path d="M.3.3l14.400 14.400M14.700.3L.3 14.700" />
            </svg>
          </WindowButton>
        </WindowButtons>
      </TabStrip>

      <Toolbar>
        <NavGroup>
          <NavIcon $dim>
            <MdArrowBack size={28} />
          </NavIcon>
          <NavIcon>
            <MdArrowForward size={28} />
          </NavIcon>
          <NavIcon>
            <MdRefresh size={29} />
          </NavIcon>
        </NavGroup>
        <Omnibox>
          <MdLock size={20} />
          <Url>
            <Host w={132}>dev.azure.com</Host>
            <Fit w={420}>/test292956/demo/_git/demo/pullrequest/16</Fit>
          </Url>
          <OmniActions>
            <Share />
            <MdStarBorder size={27} />
          </OmniActions>
        </Omnibox>
        <ToolbarActions>
          <MdExtension size={26} color="#5f6368" />
          <PizzaAvatar>
            <Pizza />
          </PizzaAvatar>
          <UpdateButton>
            <Fit w={58}>Update</Fit>
            <Dots>
              <i />
              <i />
              <i />
            </Dots>
          </UpdateButton>
        </ToolbarActions>
      </Toolbar>

      <Header>
        <DevOps size={32} />
        <Crumbs>
          {crumbs.map(([text, w]) => (
            <React.Fragment key={text}>
              <Fit w={w}>{text}</Fit>
              <Slash>/</Slash>
            </React.Fragment>
          ))}
          <RepoCrumb>
            <Git />
            <Fit w={53}>demo</Fit>
            <Chevron w={18} h={10} color="#767676" />
          </RepoCrumb>
        </Crumbs>
        <SearchBox>
          <Magnifier />
          <Fit w={61}>Search</Fit>
        </SearchBox>
        <HeaderIcons>
          <HeaderIcon>
            <TaskList />
          </HeaderIcon>
          <HeaderIcon>
            <Bag />
          </HeaderIcon>
          <HeaderIcon>
            <Help />
          </HeaderIcon>
          <HeaderIcon>
            <UserSettings />
          </HeaderIcon>
        </HeaderIcons>
        <Avatar $size={48} $font={19}>SA</Avatar>
      </Header>

      <Body>
        <Rail>
          <RailItem $h={70}>
            <ProjectTile>D</ProjectTile>
          </RailItem>
          <RailItem $h={61}>
            <ThinGlyph>
              <Plus />
            </ThinGlyph>
          </RailItem>
          <RailRule $h={2} $m="0 14px 6px 15px" />
          {railIcons.map((Icon, i) => (
            <RailItem key={i} $selected={i === 2}>
              <Icon />
            </RailItem>
          ))}
          <RailRule $h={1} $m="auto 14px 0 15px" />
          <RailItem>
            <ThinGlyph>
              <Gear />
            </ThinGlyph>
          </RailItem>
          <RailItem $h={70}>
            <ThinGlyph $drop={2}>
              <Expand />
            </ThinGlyph>
          </RailItem>
        </Rail>

        <Main>
          <PageTabs>
            {pageTabs.map(([text, w], i) => (
              <PageTab key={text} $active={i === 0}>
                <Fit w={w}>{text}</Fit>
              </PageTab>
            ))}
          </PageTabs>
          <Scroller>
            <Feed>
              <PastEdge />
              <Entry>
                <Gutter>
                  <Line $h={30} $look="none" />
                  <GutterIcon>
                    <Bubble plus />
                  </GutterIcon>
                  <Line $look="dashed" />
                </Gutter>
                <Card>
                  <ComposeRow $top={24}>
                    <ComposeAvatar $drop={5}>
                      <Avatar $size={36} $font={13.5}>SA</Avatar>
                    </ComposeAvatar>
                    <Field>
                      <Fit w={161}>Add a comment...</Fit>
                    </Field>
                  </ComposeRow>
                </Card>
              </Entry>
              {threads.map((t, i) => (
                <Thread key={i} lines={t.lines} bottom={t.bottom} first={i === 0} />
              ))}
            </Feed>
            <Side>
              <EmptyBox>
                <Fit w={134}>No work items</Fit>
              </EmptyBox>
            </Side>
          </Scroller>
        </Main>
        <ScrollTrack>
          <ScrollThumb />
        </ScrollTrack>
      </Body>

      <Taskbar>
        <SystemButton>
          <WindowsLogo />
        </SystemButton>
        <SystemButton>
          <Magnifier size={24} color="#fff" sw={1.3} />
        </SystemButton>
        <Apps>
          {apps.map(([Icon, mode], i) => (
            <AppButton key={i} $active={mode === "active"}>
              <Icon />
              <Running $mode={mode} />
            </AppButton>
          ))}
        </Apps>
        <Tray>
          <Weather>
            <Moon />
            <Fit w={43}>31°C</Fit>
            <Fit w={45}>Haze</Fit>
          </Weather>
          <TrayIcons>
            <Chevron w={18} h={11} color="#fff" flip />
            <SyncGroup>
              <SyncIcon />
              <Battery />
            </SyncGroup>
            <Wifi />
            <Volume />
          </TrayIcons>
          <Clock>
            <Fit w={64}>7:49 PM</Fit>
          </Clock>
          <Notify>
            <NotifyIcon />
          </Notify>
          <DesktopPeek />
        </Tray>
      </Taskbar>
    </Screen>
  );
}
